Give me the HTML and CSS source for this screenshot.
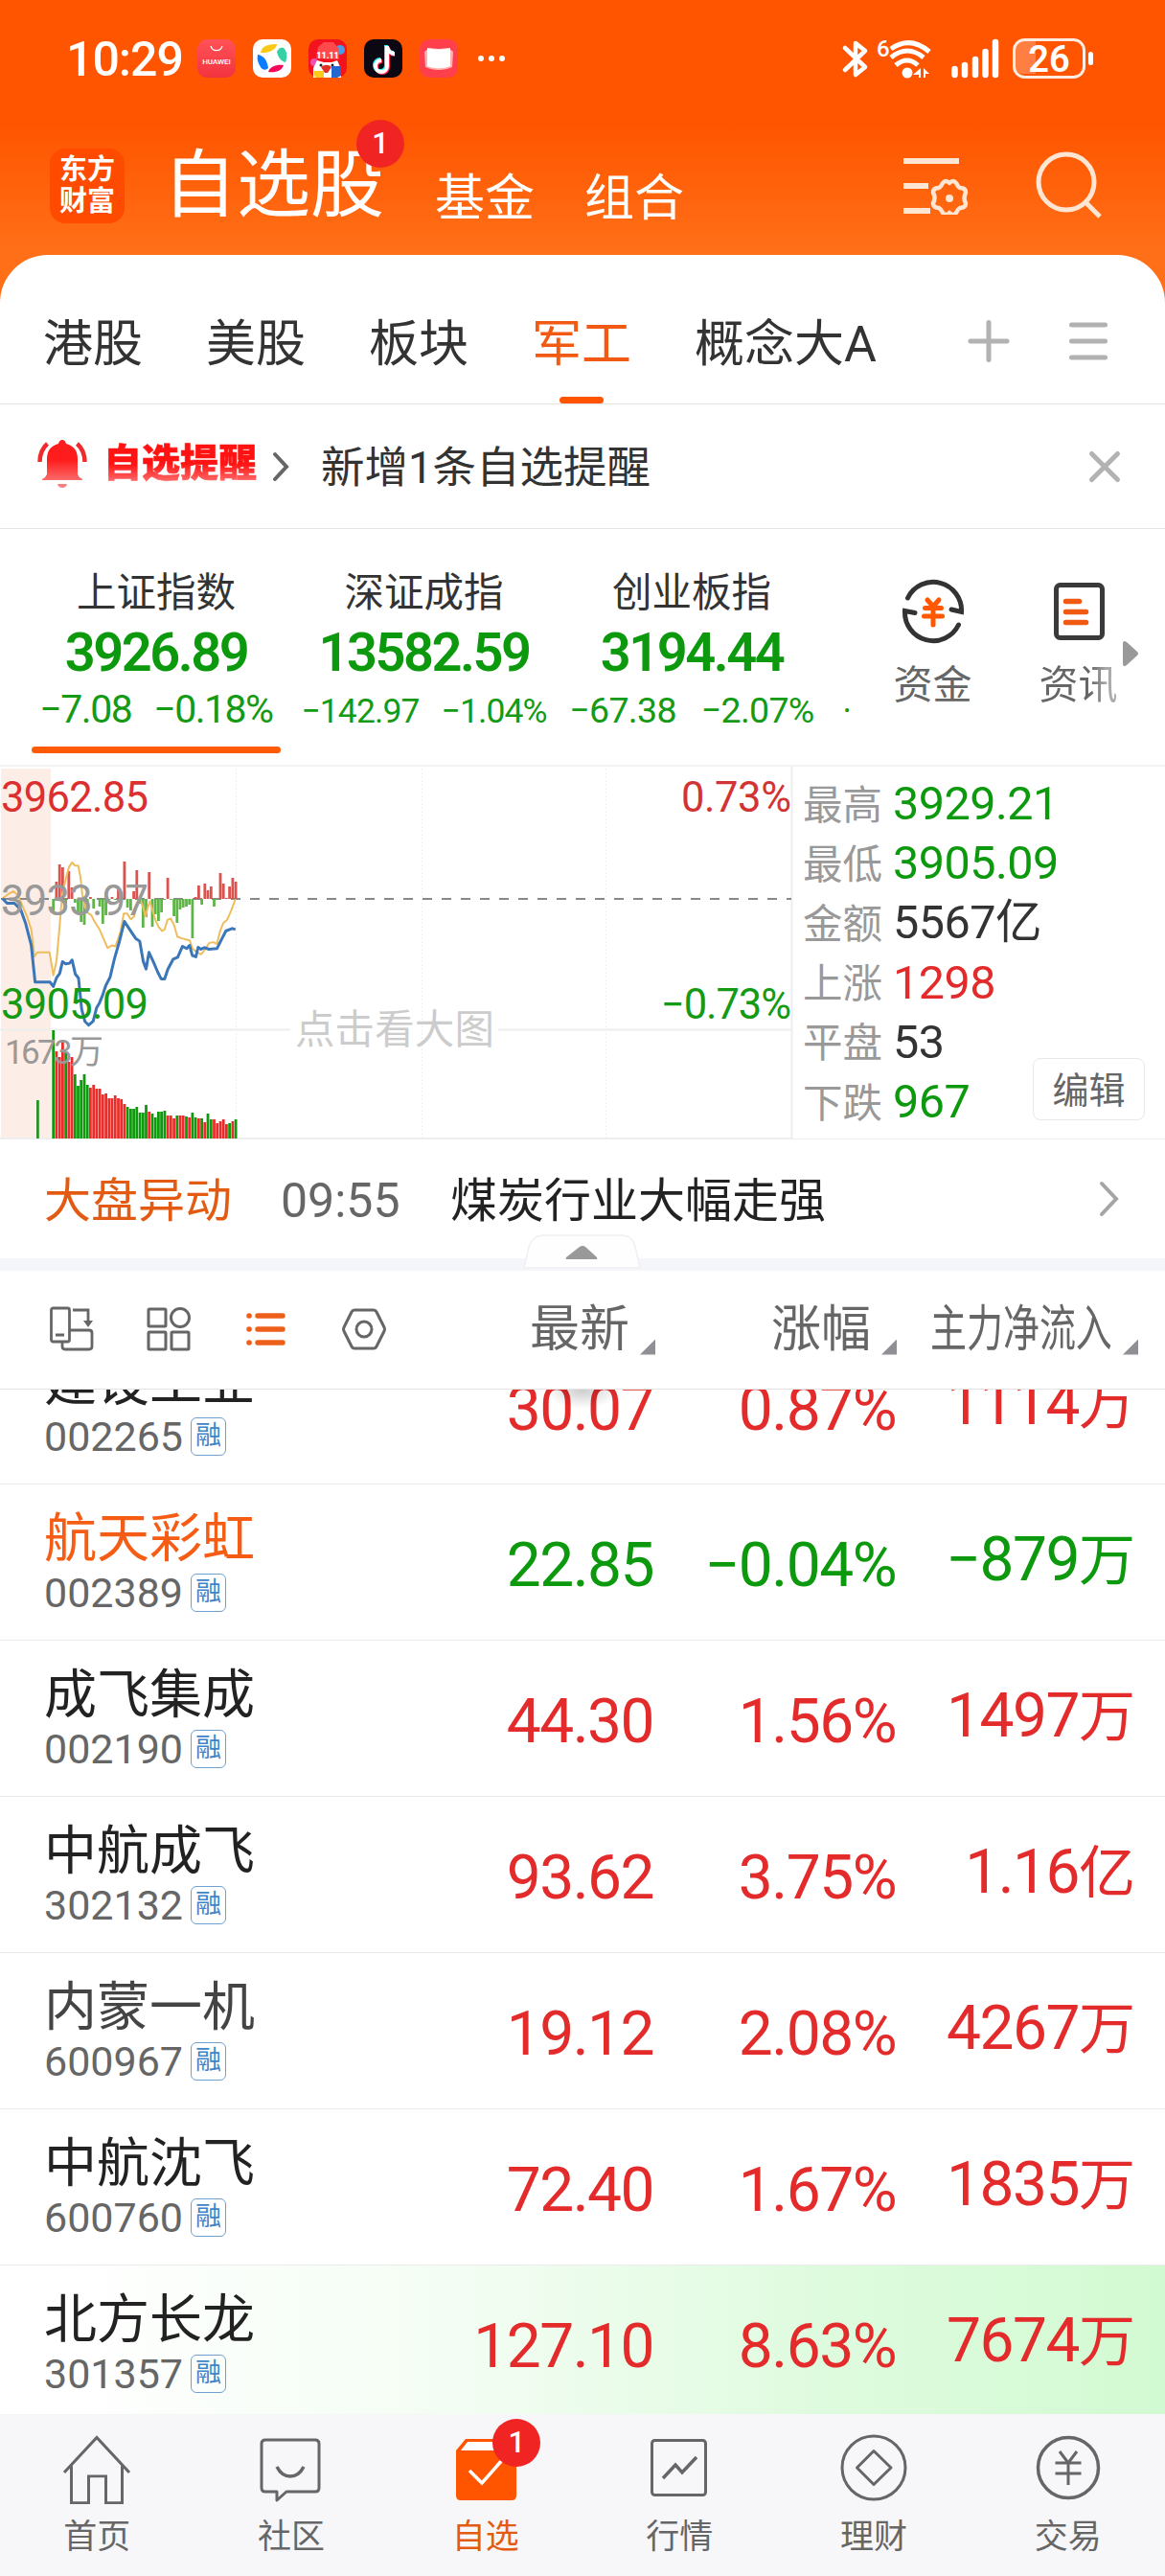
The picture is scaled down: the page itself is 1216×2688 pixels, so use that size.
FILE: index.html
```html
<!DOCTYPE html>
<html lang="zh-CN">
  <head>
    <meta charset="UTF-8" />
    <meta name="viewport" content="width=device-width, initial-scale=1.0" />
    <title>自选股</title>
    <link rel="stylesheet" href="styles.css">
  </head>
  <body>
    <!-- Status bar -->
    <div class="status">
      <span class="time">10:29</span>
      <div class="app-icons">
        <svg width="40" height="40" viewBox="0 0 40 40">
          <defs>
            <linearGradient id="hw" x1="0" y1="0" x2="0" y2="1">
              <stop offset="0" stop-color="#ff5257" />
              <stop offset="1" stop-color="#f2333f" />
            </linearGradient>
          </defs>
          <rect width="40" height="40" rx="10" fill="url(#hw)" />
          <path d="M14 7a6.200 6.200 0 0 0 12 0" fill="none" stroke="#fff" stroke-width="1.200" />
          <text x="20" y="25.500" class="hw-text">HUAWEI</text>
        </svg>
        <svg width="40" height="40" viewBox="0 0 40 40">
          <rect width="40" height="40" rx="10" fill="#fff" />
          <path d="M8 14C9 8 14 5 25 5c0 5-8 10-17 9z" fill="#fbc816" />
          <path d="M25 13c2-4 4-5 7-4 4 4 4 9 2 15-5-1-8-6-9-11z" fill="#35d0a5" />
          <path d="M5 16c7 1 10 7 11 14-3 3-6 2-8-1-3-5-4-8-3-13z" fill="#0a7cff" />
          <path d="M16 34c2-6 9-8 16-7-2 6-8 8-16 7z" fill="#f5075b" />
        </svg>
        <svg width="40" height="40" viewBox="0 0 40 40">
          <rect width="40" height="40" rx="10" fill="#f2131e" />
          <circle cx="33" cy="11" r="5" fill="#4a9be8" />
          <circle cx="6" cy="24" r="4" fill="#f04fb0" />
          <path d="M8 20L10 8l6-5h10l5 6 1 12z" fill="#ff4a4c" />
          <text x="20" y="20" class="sale-text">11.11</text>
          <path d="M5 40V30l4-8 7 2h8l6-2 4 9v9z" fill="#fff" />
          <path d="M13 29c4-3 8-3 11 0l-4 6h-3z" fill="#e33022" />
          <circle cx="13" cy="27" r="1.500" fill="#222" />
          <circle cx="25" cy="27" r="1.500" fill="#222" />
          <path d="M6 33h10v7H9c-2 0-3-2-3-3z" fill="#fbc81c" />
          <path d="M24 28h10v10l-4 2h-6z" fill="#2569cf" />
        </svg>
        <svg width="40" height="40" viewBox="0 0 40 40">
          <rect width="40" height="40" rx="10" fill="#0b0713" />
          <g fill="none" stroke-width="4">
            <path d="M23 6v21a6 6 0 1 1-6-6M23 7c1 4 4 7 8 7" stroke="#25f4ee" />
            <path d="M25 8v21a6 6 0 1 1-6-6M25 9c1 4 4 7 7 7" stroke="#fe2c55" />
            <path d="M24 7v21a6 6 0 1 1-6-6M24 8c1 4 4 7 8 7" stroke="#fff" />
          </g>
        </svg>
        <svg width="40" height="40" viewBox="0 0 40 40">
          <rect width="40" height="40" rx="10" fill="#ff3f4c" />
          <path d="M5 13l5-4 10 1 10-1 5 4-1 16c-9 4-19 4-28 0z" fill="#ffb4b4" />
          <path d="M8 9c8 2 16 2 24 0v19c-8 3-16 3-24 0z" fill="#fff" />
        </svg>
      </div>
      <svg class="dots" width="30" height="8" viewBox="0 0 30 8">
        <circle cx="4" cy="4" r="3" fill="#fff" />
        <circle cx="15" cy="4" r="3" fill="#fff" />
        <circle cx="26" cy="4" r="3" fill="#fff" />
      </svg>
      <svg class="signals" width="270" height="50" viewBox="0 0 270 50">
        <!-- bluetooth -->
        <path d="M5 13l21 20-10 8V8l10 8L5 36" transform="translate(-1 1)" fill="none" stroke="#fff" stroke-width="4.500" stroke-linecap="round" stroke-linejoin="round" />
        <!-- wifi 6 -->
        <text x="37" y="23" class="wifi-six">6</text>
        <g fill="none" stroke="#fff" stroke-width="5">
          <path d="M52 15q20-14 40 3" />
          <path d="M52 24q17-14 34 0" />
          <path d="M57 32q12-10 23 0" />
        </g>
        <circle cx="69" cy="40" r="5.500" fill="#fff" />
        <path d="M83 35v10h-2v-3h-6zM86 35l6 6h-4v4h-2z" fill="#fff" />
        <!-- signal -->
        <g stroke="#fff" stroke-width="6.500" stroke-linecap="round">
          <path d="M118.500 36v6M129 32v10M140 26v16M150.500 18v24M161 8v34" />
        </g>
        <!-- battery -->
        <path d="M190 7h13v34h-13q-9 0-9-10V17q0-10 9-10z" fill="#ff7f42" />
        <rect x="180.500" y="5.500" width="73" height="39" rx="11" fill="none" stroke="#ffece0" stroke-width="3" />
        <rect x="258" y="18" width="5" height="14" rx="2.500" fill="#fff" />
        <text x="217" y="38.500" class="battery-text">26</text>
      </svg>
    </div>

    <!-- Title bar -->
    <div class="titlebar">
      <div class="logo">东方<br>财富</div>
      <div class="titles">
        <div class="title">自选股<span class="badge">1</span></div>
        <div class="subtitle">基金</div>
        <div class="subtitle">组合</div>
      </div>
      <svg class="filter-icon" width="72" height="60" viewBox="0 0 72 60">
        <path d="M2 4h58M2 30h26M2 56h28" fill="none" stroke="#ffe6d3" stroke-width="6" />
        <path d="M43 27q3-4 7 0 4-4 7 0 2 4 4 5 6 0 6 5-3 6 0 11 0 5-6 5-2 1-4 5-3 4-7 0-4 4-7 0-2-4-4-5-6 0-6-5 3-6 0-11 0-5 6-5 2-1 4-5z" fill="none" stroke="#ffe6d3" stroke-width="4.500" stroke-linejoin="round" />
        <circle cx="50" cy="43" r="4" fill="#ffe6d3" />
      </svg>
      <svg class="search-icon" width="74" height="76" viewBox="0 0 74 76">
        <circle cx="33" cy="34" r="29" fill="none" stroke="#ffe6d3" stroke-width="5" />
        <path d="M53 55l15 15" stroke="#ffe6d3" stroke-width="5" />
      </svg>
    </div>

    <div class="sheet">
      <!-- Group tabs -->
      <div class="tabs">
        <div class="tab">港股</div>
        <div class="tab">美股</div>
        <div class="tab">板块</div>
        <div class="tab active">军工</div>
        <div class="tab">概念大A</div>
        <svg class="tab-add" width="48" height="48" viewBox="0 0 48 48">
          <path d="M24 4.500v39M5 24h38" stroke="#b2b2b2" stroke-width="5" stroke-linecap="round" />
        </svg>
        <svg class="tab-menu" width="48" height="48" viewBox="0 0 48 48">
          <path d="M6.500 7h35M6.500 24h35M6.500 41h35" stroke="#b2b2b2" stroke-width="5" stroke-linecap="round" />
        </svg>
      </div>

      <!-- Reminder -->
      <div class="alert">
        <svg width="54" height="54" viewBox="0 0 54 54">
          <defs>
            <linearGradient id="bell" x1="0" y1="0" x2="0" y2="1">
              <stop offset="0.500" stop-color="#ff1c1c" />
              <stop offset="1" stop-color="#fb6a6a" />
            </linearGradient>
          </defs>
          <path d="M27 2q3 0 4 4 12 3 12 16v16q1 3 5 5v1H6v-1q4-2 5-5V22Q11 9 23 6q1-4 4-4z" fill="url(#bell)" />
          <path d="M22 48h10q-1 4-5 4t-5-4z" fill="#f98080" />
          <path d="M3.500 25q0-12 8-19M50.500 25q0-12-8-19" fill="none" stroke="#ef2b2b" stroke-width="4.500" />
        </svg>
        <span class="alert-title">自选提醒</span>
        <svg class="alert-arrow" width="20" height="32" viewBox="0 0 20 32">
          <path d="M4 3l12 13L4 29" fill="none" stroke="#666" stroke-width="4" stroke-linecap="round" />
        </svg>
        <span class="alert-text">新增1条自选提醒</span>
        <svg class="alert-close" width="36" height="36" viewBox="0 0 36 36">
          <path d="M4.500 4.500l27 27M31.500 4.500l-27 27" stroke="#b2b2b2" stroke-width="5" stroke-linecap="round" />
        </svg>
      </div>

      <!-- Indexes -->
      <div class="indexes">
        <div class="index selected">
          <div class="index-name">上证指数</div>
          <div class="index-value">3926.89</div>
          <div class="index-change"><span>−7.08</span><span>−0.18%</span></div>
        </div>
        <div class="index">
          <div class="index-name">深证成指</div>
          <div class="index-value">13582.59</div>
          <div class="index-change small"><span>−142.97</span><span>−1.04%</span></div>
        </div>
        <div class="index">
          <div class="index-name">创业板指</div>
          <div class="index-value">3194.44</div>
          <div class="index-change medium"><span>−67.38</span><span>−2.07%</span></div>
        </div>
        <div class="index-more">·</div>
        <div class="tool">
          <svg width="68" height="68" viewBox="0 0 68 68">
            <g fill="none" stroke="#333" stroke-width="5" stroke-linecap="round">
              <path d="M7.500 20A29.500 29.500 0 0 1 63.500 34.500L53 32" />
              <path d="M60.500 48A29.500 29.500 0 0 1 4.500 33.500L15 35.500" />
            </g>
            <path d="M28 22l6 7 6-7M34 29v19M25.500 30.500h17M24.500 39h19" fill="none" stroke="#ff5800" stroke-width="5" stroke-linecap="round" />
          </svg>
          <span>资金</span>
        </div>
        <div class="tool last">
          <svg width="68" height="68" viewBox="0 0 68 68">
            <rect x="10.500" y="6.500" width="48" height="55" rx="4" fill="none" stroke="#3a3a3a" stroke-width="5" />
            <path d="M20.500 23.500h14M20.500 34.500h21M20.500 45.500h21" stroke="#f05a14" stroke-width="5.500" stroke-linecap="round" />
          </svg>
          <span>资讯</span>
        </div>
        <svg class="tool-next" width="16" height="28" viewBox="0 0 16 28">
          <path d="M0 4q0-5 4-2l11 10q2 2 0 4L4 26q-4 3-4-2z" fill="#999" />
        </svg>
      </div>

      <!-- Intraday chart -->
      <div class="market">
        <svg class="chart" width="828" height="389" viewBox="0 0 828 389">
          <rect x="1" y="2" width="52" height="386" fill="#fdede7" />
          <path d="M246.500 2v386M440.500 2v386M632.500 2v386" stroke="#eee" stroke-dasharray="2 2" />
          <path d="M0 274.500h303M520 274.500h306M0 388h828M826.500 0v388" stroke="#eee" stroke-width="2" />
          <path d="M1 138h825" stroke="#888" stroke-width="2" stroke-dasharray="10 10" />
          <g id="forceBars"></g>
          <g id="volumeBars"></g>
          <g transform="translate(0 -10) scale(0.333)" fill="none" stroke-linejoin="round">
            <polyline stroke="#eebd5c" stroke-width="6" points="8,443 25,430 42,420 57,435 70,465 85,500 98,540 108,625 117,612 155,612 160,640 167,684 177,640 186,540 195,430 208,375 216,345 226,330 235,340 245,340 252,375 258,430 266,470 275,488 286,495 296,515 312,540 325,570 337,598 352,590 362,593 370,570 378,545 388,490 398,490 410,508 420,500 430,460 438,440 448,470 456,500 462,475 470,452 478,480 487,510 497,532 508,545 516,540 525,510 535,506 545,525 556,563 570,568 585,572 595,575 603,600 615,610 630,618 645,600 655,583 668,580 680,585 690,545 700,520 712,510 725,480 738,445" />
            <polyline stroke="#3b76b8" stroke-width="9" points="8,443 22,458 45,458 65,478 80,520 98,590 110,705 157,705 167,719 177,692 187,678 196,641 206,648 218,646 226,636 236,680 246,692 256,790 266,828 278,840 292,828 303,785 312,770 322,745 332,715 345,690 358,635 375,575 390,515 403,535 425,568 438,577 449,640 458,664 467,612 480,640 495,675 505,695 516,695 526,665 543,633 557,627 572,593 585,600 594,590 603,622 614,626 621,596 630,602 641,597 655,602 680,600 695,570 708,545 718,541 728,537 738,540" />
          </g>
          <g class="chart-label">
            <text x="1" y="47" fill="#dc2f2f" textLength="154">3962.85</text>
            <text x="1" y="155" fill="#999" textLength="154">3933.97</text>
            <text x="1" y="263" fill="#149a14" textLength="154">3905.09</text>
            <text x="826" y="47" fill="#d23434" text-anchor="end" textLength="115">0.73%</text>
            <text x="826" y="263" fill="#149a14" text-anchor="end" textLength="136">−0.73%</text>
          </g>
          <text x="5" y="310" class="volume-label" textLength="103">1673万</text>
          <text x="308" y="289" class="chart-hint" textLength="208">点击看大图</text>
        </svg>
        <div class="stats">
          <div class="stat"><span>最高</span><b class="down">3929.21</b></div>
          <div class="stat"><span>最低</span><b class="down">3905.09</b></div>
          <div class="stat"><span>金额</span><b>5567亿</b></div>
          <div class="stat"><span>上涨</span><b class="up">1298</b></div>
          <div class="stat"><span>平盘</span><b>53</b></div>
          <div class="stat"><span>下跌</span><b class="down">967</b></div>
          <div class="edit">编辑</div>
        </div>
      </div>

      <!-- News line -->
      <div class="news">
        <span class="news-tag">大盘异动</span>
        <span class="news-time">09:55</span>
        <span class="news-text">煤炭行业大幅走强</span>
        <svg class="news-arrow" width="24" height="40" viewBox="0 0 24 40">
          <path d="M4 4l15 16L4 36" fill="none" stroke="#a5a5a5" stroke-width="4" stroke-linecap="round" />
        </svg>
      </div>
      <div class="band">
        <svg class="handle" width="124" height="38" viewBox="0 0 124 38">
          <path d="M1 36L6 14Q10 2 22 2h80q12 0 15 12l5 22z" fill="#fefefe" stroke="#eff0f2" stroke-width="1.500" />
          <path d="M46 27q-2 0-1-2l14-11q3-2 6 0l12 11q1 2-1 2z" fill="#999" />
        </svg>
      </div>

      <!-- Column header -->
      <div class="columns">
        <div class="views">
          <svg width="48" height="52" viewBox="0 0 48 52">
            <g fill="none" stroke="#666" stroke-width="2.800">
              <rect x="3.500" y="4" width="19" height="35" rx="2" />
              <path d="M8 32h9M23 27h20q3 0 3 3v14q0 3-3 3H18q-3 0-3-3v-5M26 6h16v12" />
            </g>
            <path d="M37 17h10l-5 7z" fill="#666" />
          </svg>
          <svg width="48" height="52" viewBox="0 0 48 52">
            <g fill="none" stroke="#666" stroke-width="3">
              <rect x="3" y="5" width="18" height="18" rx="1" />
              <circle cx="36" cy="14" r="9.500" />
              <rect x="3" y="29" width="18" height="18" rx="1" />
              <rect x="27" y="29" width="18" height="18" rx="1" />
            </g>
          </svg>
          <svg width="48" height="52" viewBox="0 0 48 52">
            <path d="M6 12h.1M15 12h26M6 26h.1M15 26h26M6 40h.1M15 40h26" stroke="#ee5f1b" stroke-width="5.500" stroke-linecap="round" />
          </svg>
          <svg width="48" height="52" viewBox="0 0 48 52">
            <path d="M14 6h20q2 0 3 2l8 16q1 2 0 4l-8 16q-1 2-3 2H14q-2 0-3-2L3 28q-1-2 0-4l8-16q1-2 3-2z" fill="none" stroke="#666" stroke-width="3" />
            <circle cx="24" cy="26" r="8" fill="none" stroke="#666" stroke-width="3" />
          </svg>
        </div>
        <div class="col">最新<i></i></div>
        <div class="col">涨幅<i></i></div>
        <div class="col"><span class="narrow">主力净流入</span><i></i></div>
      </div>

      <!-- Stock list -->
      <div class="list">
        <div class="row">
          <div class="stock"><div class="name">建设工业</div><div class="code">002265<em>融</em></div></div>
          <div class="num up">30.07</div>
          <div class="num up">0.87%</div>
          <div class="num flow up">1114<span>万</span></div>
        </div>
        <div class="row">
          <div class="stock"><div class="name hot">航天彩虹</div><div class="code">002389<em>融</em></div></div>
          <div class="num down">22.85</div>
          <div class="num down">−0.04%</div>
          <div class="num flow down">−879<span>万</span></div>
        </div>
        <div class="row">
          <div class="stock"><div class="name">成飞集成</div><div class="code">002190<em>融</em></div></div>
          <div class="num up">44.30</div>
          <div class="num up">1.56%</div>
          <div class="num flow up">1497<span>万</span></div>
        </div>
        <div class="row">
          <div class="stock"><div class="name">中航成飞</div><div class="code">302132<em>融</em></div></div>
          <div class="num up">93.62</div>
          <div class="num up">3.75%</div>
          <div class="num flow up">1.16<span>亿</span></div>
        </div>
        <div class="row">
          <div class="stock"><div class="name light">内蒙一机</div><div class="code">600967<em>融</em></div></div>
          <div class="num up">19.12</div>
          <div class="num up">2.08%</div>
          <div class="num flow up">4267<span>万</span></div>
        </div>
        <div class="row">
          <div class="stock"><div class="name">中航沈飞</div><div class="code">600760<em>融</em></div></div>
          <div class="num up">72.40</div>
          <div class="num up">1.67%</div>
          <div class="num flow up">1835<span>万</span></div>
        </div>
        <div class="row flash">
          <div class="stock"><div class="name">北方长龙</div><div class="code">301357<em>融</em></div></div>
          <div class="num up">127.10</div>
          <div class="num up">8.63%</div>
          <div class="num flow up">7674<span>万</span></div>
        </div>
      </div>
    </div>

    <!-- Bottom navigation -->
    <div class="nav">
      <div class="nav-item">
        <svg width="80" height="80" viewBox="0 0 80 80">
          <path d="M6 50l34-38 34 38M13.500 43v40h18V54h18v29h17V43" transform="translate(0 -3) scale(1 .96)" fill="none" stroke="#666" stroke-width="3" />
        </svg>
        <span>首页</span>
      </div>
      <div class="nav-item">
        <svg width="80" height="80" viewBox="0 0 80 80">
          <path d="M13 11h52q4 0 4 4v46q0 4-4 4H35l-10 9v-9H13q-4 0-4-4V15q0-4 4-4z" fill="none" stroke="#666" stroke-width="3" stroke-linejoin="round" />
          <path d="M25 39q5 10 14 10t14-10" fill="none" stroke="#666" stroke-width="3.500" />
        </svg>
        <span>社区</span>
      </div>
      <div class="nav-item active">
        <svg width="80" height="80" viewBox="0 0 80 80">
          <path d="M9 22l10-12h43l10 12v47q0 5-5 5H14q-5 0-5-5z" fill="#ff5500" />
          <path d="M14 22l7-9h40l6 9z" fill="#fff" />
          <path d="M23 43l13 13 22-25" fill="none" stroke="#fff" stroke-width="3.500" />
        </svg>
        <i class="badge">1</i>
        <span>自选</span>
      </div>
      <div class="nav-item">
        <svg width="80" height="80" viewBox="0 0 80 80">
          <rect x="11.500" y="11.500" width="56" height="57" rx="3" fill="none" stroke="#666" stroke-width="3" />
          <path d="M23 51l13-14 7 8 15-16" fill="none" stroke="#666" stroke-width="3.500" />
        </svg>
        <span>行情</span>
      </div>
      <div class="nav-item">
        <svg width="80" height="80" viewBox="0 0 80 80">
          <circle cx="40" cy="40" r="33" fill="none" stroke="#666" stroke-width="3" />
          <path d="M40 22.500L58 40 40 57.500 22.500 40z" fill="none" stroke="#666" stroke-width="3" stroke-linejoin="round" />
        </svg>
        <span>理财</span>
      </div>
      <div class="nav-item">
        <svg width="80" height="80" viewBox="0 0 80 80">
          <circle cx="40" cy="40" r="31.500" fill="none" stroke="#666" stroke-width="3.500" />
          <path d="M31 23l9 12 9-12M40 35v23M26.500 35h27M26.500 46h27" fill="none" stroke="#666" stroke-width="3" />
        </svg>
        <span>交易</span>
      </div>
    </div>

    <script>
      // One bar per minute, positive goes up from the previous close
      const force = [
        -14, 18, 36, 33, -5, 29, 12, -4, -14, -24, -27, -7, 2, -10, 0, -8, -26, -17, -1, 2,
        -1, 10, 0, 39, -9, -12, 8, 30, -5, -30, -19, 28, -29, -16, -23, -14, -1, 22, -1, -18,
        -25, -11, -9, -8, -6, -41, 2, 14, -6, 16, 9, 13, -8, -1, 27, 16, 1, 13, 22, 18
      ];
      const volume = [
        113, 91, 85, 103, 90, 80, 85, 67, 55, 61, 67, 56, 53, 56, 52, 52, 46, 47, 42, 42,
        45, 42, 41, 36, 33, 31, 31, 33, 27, 27, 35, 28, 26, 22, 28, 28, 29, 24, 24, 21,
        24, 24, 24, 23, 22, 27, 22, 21, 21, 17, 26, 20, 20, 16, 18, 20, 15, 16, 18, 20
      ];
      const volumeColor = "grrrgrrgggggrrrrrrrrrrrrgggggggrgggggrrrgrrgrggrgrggrrrrrgrg";
      const step = 3.227;

      function bar(x, y, height, color) {
        return `<rect x="${x.toFixed(1)}" y="${y}" width="2.8" height="${height}" fill="${color}" />`;
      }

      document.getElementById("forceBars").innerHTML = force
        .map((v, i) => bar(54.3 + i * step, v > 0 ? 138 - v : 138, Math.abs(v), v > 0 ? "#d9534f" : "#5fb548"))
        .join("");

      document.getElementById("volumeBars").innerHTML = volume
        .map((v, i) => bar(54.3 + i * step, 388 - v, v, volumeColor[i] === "r" ? "#ea2d2b" : "#0d9a0d"))
        .join("") + bar(38, 348, 40, "#2a922a");
    </script>
  </body>
</html>
```
FILE: styles.css
```css
* {
  box-sizing: border-box;
}

body {
  margin: 0;
  width: 1216px;
  height: 2688px;
  overflow: hidden;
  font-family: Roboto, "Noto Sans CJK SC", sans-serif;
  color: #333;
  background: linear-gradient(#ff5500 0, #ff5500 130px, #ff6f17 260px, #ff6f17 330px, #fff 330px);
}

svg {
  display: block;
  flex-shrink: 0;
}

.up {
  color: #e32b2b;
}

.down {
  color: #0d990d;
}

/* status bar */
.status {
  display: flex;
  align-items: center;
  height: 122px;
  padding-left: 69px;
}

.time {
  width: 137px;
  font-size: 50px;
  font-weight: 500;
  letter-spacing: -1px;
  line-height: 50px;
  padding-top: 2px;
  color: #fff;
}

.app-icons {
  display: flex;
  gap: 18px;
}

.hw-text {
  font-size: 8px;
  font-weight: 500;
  fill: #fff;
  text-anchor: middle;
}

.sale-text {
  font-size: 9px;
  font-weight: 900;
  fill: #fff;
  text-anchor: middle;
}

.dots {
  margin-left: 20px;
}

.signals {
  margin-left: 350px;
}

.wifi-six {
  font-size: 24px;
  font-weight: 500;
  fill: #fff;
}

.battery-text {
  font-size: 38px;
  font-weight: 600;
  fill: #fff;
  text-anchor: middle;
}

/* title bar */
.titlebar {
  display: flex;
  align-items: center;
  height: 144px;
  padding-left: 52px;
  color: #fff;
}

.logo {
  width: 78px;
  height: 78px;
  padding-top: 6px;
  border-radius: 16px;
  background: #ff4b00;
  font-size: 29px;
  font-weight: 700;
  line-height: 33px;
  text-align: center;
}

.titles {
  display: flex;
  align-items: flex-start;
  height: 100px;
  margin-left: 40px;
}

.title {
  position: relative;
  width: 284px;
  padding-top: 4px;
  font-size: 77px;
  line-height: 92px;
}

.subtitle {
  width: 156px;
  padding-top: 34px;
  font-size: 52px;
  line-height: 60px;
}

.badge {
  position: absolute;
  width: 50px;
  height: 50px;
  border-radius: 50%;
  background: #f12424;
  color: #fff;
  font-size: 31px;
  font-style: normal;
  font-weight: 500;
  line-height: 50px;
  text-align: center;
}

.title .badge {
  left: 202px;
  top: -19px;
}

.filter-icon {
  margin-left: 175px;
}

.search-icon {
  margin-left: 67px;
}

/* white sheet */
.sheet {
  height: 2252px;
  border-radius: 50px 50px 0 0;
  background: #fff;
}

.tabs {
  display: flex;
  align-items: center;
  height: 156px;
  padding: 24px 0 0 45px;
  border-bottom: 1px solid #e4e4e4;
}

.tab {
  position: relative;
  height: 131px;
  margin-right: 66px;
  padding-top: 6px;
  font-size: 52px;
  line-height: 127px;
  white-space: nowrap;
}

.tab.active {
  color: #f25a14;
}

.tab.active::after {
  content: "";
  position: absolute;
  left: 29px;
  bottom: 0;
  width: 46px;
  height: 7px;
  border-radius: 4px;
  background: #ff5500;
}

.tab-add {
  margin: 1px 0 0 27px;
}

.tab-menu {
  margin: 1px 0 0 56px;
}

.alert {
  display: flex;
  align-items: center;
  height: 130px;
  padding-left: 38px;
  border-bottom: 1px solid #e4e4e4;
}

.alert svg:first-child {
  margin-top: -6px;
}

.alert-title {
  margin: -6px 0 0 16px;
  background: linear-gradient(#ff1212 50%, #ff7070 85%);
  background-clip: text;
  -webkit-text-stroke: 0.600px transparent;
  color: transparent;
  font-size: 40px;
  font-weight: 900;
  line-height: 56px;
}

.alert-arrow {
  margin-left: 15px;
}

.alert-text {
  margin: -6px 0 0 32px;
  font-size: 45.500px;
}

.alert-close {
  margin-left: auto;
  margin-right: 45px;
}

/* indexes */
.indexes {
  display: flex;
  height: 248px;
  padding-left: 33px;
  border-bottom: 2px solid #f3f3f3;
}

.index {
  position: relative;
  width: 260px;
  margin-right: 19.500px;
  flex-shrink: 0;
  padding-top: 37px;
  text-align: center;
  white-space: nowrap;
}

.index.selected::after {
  content: "";
  position: absolute;
  left: 0;
  top: 227px;
  width: 260px;
  height: 7px;
  border-radius: 4px;
  background: #ff5a05;
}

.index-name {
  font-size: 41.500px;
  line-height: 60px;
}

.index-value {
  margin-top: 2px;
  color: #0d990d;
  font-size: 56px;
  font-weight: 600;
  letter-spacing: -2.500px;
  line-height: 60px;
}

.index-change {
  display: flex;
  justify-content: center;
  gap: 23px;
  height: 56px;
  color: #149a14;
  font-size: 41px;
  letter-spacing: -1.500px;
  line-height: 58px;
}

.index-change.small {
  font-size: 35.500px;
  line-height: 62px;
  letter-spacing: -0.900px;
}

.index-change.medium {
  gap: 26px;
  font-size: 37.500px;
  line-height: 60px;
  letter-spacing: -0.700px;
}

.index-more {
  width: 18px;
  margin-left: 8px;
  padding-top: 162px;
  color: #149a14;
  font-size: 36px;
  line-height: 56px;
}

.tool {
  display: flex;
  flex-direction: column;
  align-items: center;
  width: 84px;
  margin-left: 34px;
  padding-top: 52px;
  font-size: 41px;
  line-height: 60px;
  color: #666;
}

.tool span {
  margin-top: 13px;
}

.tool.last {
  margin-left: 68px;
}

.tool.last span {
  background: linear-gradient(90deg, #666 65%, #aaa 85%);
  background-clip: text;
  color: transparent;
}

.tool-next {
  margin: 116px 0 0 4px;
}

/* chart */
.market {
  display: flex;
  height: 389px;
  border-bottom: 1px solid #eee;
}

.chart-label {
  font-size: 43.500px;
}

.volume-label {
  font-size: 35px;
  fill: #999;
}

.chart-hint {
  font-size: 41.500px;
  fill: #ccc;
}

.stats {
  position: relative;
  flex: 1;
  padding: 8px 0 0 10px;
}

.stat {
  display: flex;
  align-items: center;
  height: 62.200px;
}

.stat span {
  width: 94px;
  margin-top: -5px;
  color: #999;
  font-size: 41.500px;
}

.stat b {
  font-size: 48.500px;
  font-weight: 400;
  letter-spacing: -0.500px;
  line-height: 60px;
}

.edit {
  position: absolute;
  right: 21px;
  top: 304px;
  width: 117px;
  height: 65px;
  border: 1px solid #e8e8e8;
  border-radius: 8px;
  background: #fff;
  color: #666;
  font-size: 38px;
  line-height: 66px;
  text-align: center;
}

/* news */
.news {
  display: flex;
  align-items: center;
  height: 124px;
  padding: 0 46px 0 46px;
  font-size: 49px;
}

.news-tag {
  width: 247px;
  margin-top: -6px;
  color: #e35b12;
}

.news-time {
  width: 177px;
  padding-top: 3px;
  color: #666;
  font-size: 50px;
}

.news-text {
  margin-top: -6px;
  color: #222;
}

.news-arrow {
  margin-left: auto;
}

.band {
  position: relative;
  height: 13px;
  background: #f5f6f9;
}

.handle {
  position: absolute;
  left: 546px;
  top: -26px;
}

/* list header */
.columns {
  position: relative;
  display: grid;
  grid-template-columns: 684px 252px 252px;
  align-items: center;
  height: 124px;
  border-bottom: 1px solid #e4e4e4;
  color: #666;
}

.views {
  position: absolute;
  left: 50px;
  top: 35px;
  display: flex;
  gap: 54px;
}

.col {
  display: flex;
  justify-content: flex-end;
  align-items: center;
  font-size: 52px;
  line-height: 76px;
}

.col i {
  width: 16px;
  height: 16px;
  margin: 36px 0 0 11px;
  background: #8f8f96;
  clip-path: polygon(100% 0, 100% 100%, 0 100%);
}

.narrow {
  width: 190px;
  white-space: nowrap;
  transform: scaleX(0.730);
  transform-origin: left;
}

/* stock rows */
.list {
  position: relative;
  height: 1069px;
  overflow: hidden;
}

/* soft shadow left under the header */
.list::before {
  content: "";
  position: absolute;
  left: 568px;
  top: 0;
  width: 80px;
  height: 20px;
  background: radial-gradient(ellipse at top, rgba(0, 0, 0, 0.200), transparent 70%);
}

.row {
  display: grid;
  grid-template-columns: 300px 336px 253px 250px;
  height: 163px;
  padding-left: 46px;
  border-bottom: 1px solid #ebebeb;
}

.row:first-child {
  margin-top: -64px;
}

.row.flash {
  background: linear-gradient(90deg, #fff 5%, #f3fdf3 40%, #dffbdf 70%, #d2fad2);
}

.stock {
  padding-top: 18px;
}

.name {
  height: 73px;
  color: #222;
  font-size: 55px;
  line-height: 76px;
}

.name.hot {
  color: #f55d14;
}

.name.light {
  color: #444;
}

.code {
  display: flex;
  align-items: center;
  height: 44px;
  color: #666;
  font-size: 43px;
}

.code em {
  width: 37px;
  height: 40px;
  margin-left: 8px;
  border: 1.500px solid #6ea0d0;
  border-radius: 6px;
  color: #3f83c9;
  font-size: 27px;
  font-style: normal;
  line-height: 37px;
  text-align: center;
}

.num {
  font-size: 64px;
  letter-spacing: -1.500px;
  line-height: 169px;
  text-align: right;
  white-space: nowrap;
}

.num.flow {
  height: 162px;
  line-height: 158px;
}

.flow span {
  font-size: 59px;
  letter-spacing: 0;
}

/* bottom navigation */
.nav {
  display: flex;
  height: 170px;
  border-top: 1px solid #ddd;
  background: #f7f7fa;
}

.nav-item {
  position: relative;
  display: flex;
  flex: 1;
  flex-direction: column;
  align-items: center;
  padding-top: 16px;
  color: #666;
  font-size: 35px;
  line-height: 50px;
}

.nav-item span {
  margin-top: 8px;
}

.nav-item.active {
  color: #e35b12;
}

.nav-item .badge {
  left: 109px;
  top: 5px;
}
```
